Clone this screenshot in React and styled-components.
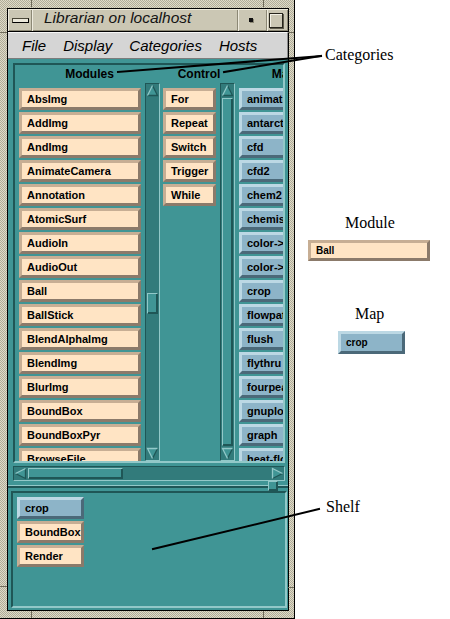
import React from "react";
import styled, { createGlobalStyle } from "styled-components";

const GlobalStyle = createGlobalStyle`
  html, body { margin: 0; padding: 0; background: #ffffff; }
  body { font-family: "Liberation Sans", Arial, Helvetica, sans-serif; }
  *, *::before, *::after { box-sizing: border-box; }
`;

const C = {
  teal: "#409595",
  trough: "#327b7b",
  shadow: "#1f5656",
  light: "#92c8c8",
  peach: "#ffe4c4",
  peachLight: "#c7ae94",
  peachDark: "#8b7a6a",
  blue: "#8db4c8",
  blueLight: "#bcd8e4",
  blueDark: "#4b6979",
  beige: "#cbc7b4",
  menu: "#d5d5d5",
};

const SANS = `"Liberation Sans", Arial, Helvetica, sans-serif`;
const SERIF = `"Liberation Serif", "Times New Roman", serif`;

const Page = styled.div`
  position: relative;
  display: flex;
  width: 450px;
  height: 619px;
  overflow: hidden;
  background: #fff;
`;

const Frame = styled.div`
  position: relative;
  flex: none;
  width: 295px;
  height: 619px;
  padding: 8px 5px 7px 7px;
  border-right: 1px solid #000;
  border-bottom: 1px solid #000;
  background-color: #c9c5b1;
  background-image: repeating-conic-gradient(#dedac8 0% 25%, #b0ac98 0% 50%);
  background-size: 2px 2px;
`;

const Notch = styled.span`
  position: absolute;
  left: ${(p) => p.$x}px;
  top: ${(p) => p.$y}px;
  width: ${(p) => p.$w}px;
  height: ${(p) => p.$h}px;
  background: #6f6b5a;
`;

const Client = styled.div`
  display: flex;
  flex-direction: column;
  height: 100%;
  border: 1px solid #000;
  background: ${C.teal};
`;

/* ---------- title bar ---------- */
const TitleBar = styled.div`
  flex: none;
  display: flex;
  height: 23px;
  border-bottom: 1px solid #000;
  background: ${C.beige};
`;

const TitleCell = styled.div`
  flex: ${(p) => (p.$grow ? 1 : "none")};
  width: ${(p) => (p.$w ? `${p.$w}px` : "auto")};
  display: flex;
  align-items: center;
  justify-content: ${(p) => p.$justify || "center"};
  padding-left: ${(p) => p.$pad || 0}px;
  box-shadow: inset 1px 1px #eeebde, inset -1px -1px #8c8875;
`;

const TitleText = styled.span`
  align-self: flex-start;
  font: italic 15.5px/18px ${SANS};
  color: #141414;
  white-space: nowrap;
`;

const MenuGlyph = styled.span`
  display: block;
  width: 17px;
  height: 5px;
  background: #ebe8da;
  border: 1px solid #4a4738;
  border-right-color: #000;
  border-bottom-color: #000;
`;

const IconDot = styled.span`
  display: block;
  width: 4px;
  height: 4px;
  background: #111;
  box-shadow: 1px 1px #8c8875;
  margin-right: 3px;
`;

const MaxGlyph = styled.span`
  display: block;
  width: 14px;
  height: 15px;
  border: 1px solid #26241c;
  box-shadow: inset 1px 1px #f3f1e6, 1px 1px #5f5c4c;
  background: ${C.beige};
`;

/* ---------- menu bar ---------- */
const MenuBar = styled.div`
  flex: none;
  display: flex;
  gap: 17px;
  height: 27px;
  padding-left: 14px;
  background: ${C.menu};
  border-top: 1px solid #f6f6f6;
  border-bottom: 1px solid #7c7c7c;
  border-right: 1px solid #8c8c8c;
`;

const MenuItem = styled.span`
  font: italic 15px/25px ${SANS};
  color: #000;
  white-space: nowrap;
`;

/* ---------- main teal area ---------- */
const Main = styled.div`
  flex: 1;
  display: flex;
  flex-direction: column;
  min-height: 0;
  background: ${C.teal};
`;

const ListPane = styled.div`
  flex: none;
  display: flex;
  height: 400px;
  margin: 4px 3px 0 5px;
  padding-left: 4px;
  border: 2px solid;
  border-color: ${C.shadow} ${C.light} ${C.light} ${C.shadow};
  overflow: hidden;
`;

const Group = styled.div`
  flex: none;
  display: flex;
  flex-direction: column;
  margin-left: ${(p) => p.$gap || 0}px;
`;

const GroupHeader = styled.div`
  flex: none;
  height: 18px;
  font: bold 12px/18px ${SANS};
  color: #000;
  text-align: center;
  white-space: nowrap;
`;

const GroupBody = styled.div`
  flex: 1;
  display: flex;
  gap: 4px;
  min-height: 0;
`;

const List = styled.div`
  flex: none;
  width: ${(p) => p.$w}px;
  display: flex;
  flex-direction: column;
  gap: 2px;
  padding-top: 5px;
  overflow: hidden;
`;

const Button = styled.div`
  flex: none;
  display: flex;
  align-items: center;
  width: ${(p) => p.$w}px;
  height: ${(p) => p.$h || 22}px;
  padding-left: 5px;
  border: 3px solid;
  border-color: ${(p) =>
    p.$kind === "map"
      ? `${C.blueLight} ${C.blueDark} ${C.blueDark} ${C.blueLight}`
      : `${C.peachLight} ${C.peachDark} ${C.peachDark} ${C.peachLight}`};
  background: ${(p) => (p.$kind === "map" ? C.blue : C.peach)};
  font-family: ${SANS};
  font-weight: bold;
  font-size: ${(p) => p.$size || 11}px;
  color: #000;
  white-space: nowrap;
  overflow: hidden;
`;

/* ---------- scrollbars ---------- */
const VScroll = styled.div`
  flex: none;
  display: flex;
  flex-direction: column;
  width: 15px;
  border: 1px solid;
  border-color: ${C.shadow} ${C.light} ${C.light} ${C.shadow};
  background: ${C.trough};
`;

const HScroll = styled.div`
  flex: none;
  display: flex;
  height: 15px;
  margin: 3px 3px 0 5px;
  border: 1px solid;
  border-color: ${C.shadow} ${C.light} ${C.light} ${C.shadow};
  background: ${C.trough};
`;

const Track = styled.div`
  flex: 1;
  display: flex;
  flex-direction: ${(p) => (p.$horizontal ? "row" : "column")};
  padding: 1px;
  min-width: 0;
  min-height: 0;
`;

const Thumb = styled.div`
  flex: ${(p) => (p.$fill ? 1 : "none")};
  ${(p) =>
    p.$horizontal
      ? `width: ${p.$size}px; margin-left: ${p.$offset || 0}px;`
      : p.$fill
      ? ""
      : `height: ${p.$size}px; margin-top: ${p.$offset || 0}px;`}
  border: 1px solid;
  border-color: ${C.light} ${C.shadow} ${C.shadow} ${C.light};
  box-shadow: inset -1px -1px ${C.shadow};
  background: ${C.teal};
`;

const ArrowBox = styled.svg`
  flex: none;
  display: block;
`;

const ARROWS = {
  up: { pts: "6.5,1.5 11.5,11.5 1.5,11.5", light: "1.5,11.5 6.5,1.5", dark: "6.5,1.5 11.5,11.5 1.5,11.5" },
  down: { pts: "1.5,1.5 11.5,1.5 6.5,11.5", light: "6.5,11.5 1.5,1.5 11.5,1.5", dark: "11.5,1.5 6.5,11.5" },
  left: { pts: "1.5,6.5 11.5,1.5 11.5,11.5", light: "1.5,6.5 11.5,1.5", dark: "11.5,1.5 11.5,11.5 1.5,6.5" },
  right: { pts: "1.5,1.5 11.5,6.5 1.5,11.5", light: "1.5,11.5 1.5,1.5 11.5,6.5", dark: "11.5,6.5 1.5,11.5" },
};

function Arrow({ dir }) {
  const a = ARROWS[dir];
  return (
    <ArrowBox viewBox="0 0 13 13" width="13" height="13">
      <polygon points={a.pts} fill={C.teal} />
      <polyline points={a.dark} fill="none" stroke={C.shadow} strokeWidth="1.3" />
      <polyline points={a.light} fill="none" stroke={C.light} strokeWidth="1.3" />
    </ArrowBox>
  );
}

function VerticalScrollbar({ offset, size, fill }) {
  return (
    <VScroll>
      <Arrow dir="up" />
      <Track>
        <Thumb $offset={offset} $size={size} $fill={fill} />
      </Track>
      <Arrow dir="down" />
    </VScroll>
  );
}

/* ---------- sash & shelf ---------- */
const Sash = styled.div`
  flex: none;
  display: flex;
  align-items: center;
  height: 10px;
`;

const SashLine = styled.div`
  flex: ${(p) => (p.$w ? "none" : 1)};
  width: ${(p) => (p.$w ? `${p.$w}px` : "auto")};
  height: 3px;
  border-top: 1px solid ${C.light};
  border-bottom: 2px solid ${C.shadow};
`;

const SashHandle = styled.div`
  flex: none;
  width: 10px;
  height: 10px;
  border: 1px solid;
  border-color: ${C.light} ${C.shadow} ${C.shadow} ${C.light};
  box-shadow: inset -1px -1px ${C.shadow};
  background: ${C.teal};
`;

const ShelfPane = styled.div`
  flex: none;
  display: flex;
  flex-direction: column;
  gap: 2px;
  height: 117px;
  margin: 0 1px 0 3px;
  padding: 4px;
  border: 2px solid;
  border-color: ${C.shadow} ${C.light} ${C.light} ${C.shadow};
`;

/* ---------- annotations ---------- */
const Side = styled.div`
  flex: 1;
  display: flex;
  flex-direction: column;
  align-items: flex-start;
`;

const Note = styled.div`
  margin-top: ${(p) => p.$top}px;
  margin-left: ${(p) => p.$left}px;
  font: 16px/18px ${SERIF};
  color: #000;
  white-space: nowrap;
`;

const Placed = styled.div`
  margin-top: ${(p) => p.$top}px;
  margin-left: ${(p) => p.$left}px;
`;

const Leaders = styled.svg`
  position: absolute;
  left: 0;
  top: 0;
  pointer-events: none;
`;

/* ---------- data ---------- */
const MODULES = [
  "AbsImg", "AddImg", "AndImg", "AnimateCamera", "Annotation", "AtomicSurf",
  "AudioIn", "AudioOut", "Ball", "BallStick", "BlendAlphaImg", "BlendImg",
  "BlurImg", "BoundBox", "BoundBoxPyr", "BrowseFile",
];
const CONTROL = ["For", "Repeat", "Switch", "Trigger", "While"];
const MAPS = [
  "animation", "antarctica", "cfd", "cfd2", "chem2", "chemistry", "color->gray",
  "color->rgb", "crop", "flowpaths", "flush", "flythru", "fourpeaks", "gnuplot",
  "graph", "heat-flow",
];

export default function App() {
  return (
    <>
      <GlobalStyle />
      <Page>
        <Frame>
          <Notch $x={31} $y={0} $w={1} $h={7} />
          <Notch $x={263} $y={0} $w={1} $h={7} />
          <Notch $x={31} $y={611} $w={1} $h={7} />
          <Notch $x={263} $y={611} $w={1} $h={7} />
          <Notch $x={0} $y={32} $w={7} $h={1} />
          <Notch $x={0} $y={586} $w={7} $h={1} />
          <Notch $x={288} $y={32} $w={6} $h={1} />
          <Notch $x={288} $y={587} $w={6} $h={1} />
          <Client>
            <TitleBar>
              <TitleCell $w={24}>
                <MenuGlyph />
              </TitleCell>
              <TitleCell $grow $justify="flex-start" $pad={12}>
                <TitleText>Librarian on localhost</TitleText>
              </TitleCell>
              <TitleCell $w={29}>
                <IconDot />
              </TitleCell>
              <TitleCell $w={21} $justify="flex-start" $pad={2}>
                <MaxGlyph />
              </TitleCell>
            </TitleBar>
            <MenuBar>
              <MenuItem>File</MenuItem>
              <MenuItem>Display</MenuItem>
              <MenuItem>Categories</MenuItem>
              <MenuItem>Hosts</MenuItem>
            </MenuBar>
            <Main>
              <ListPane>
                <Group>
                  <GroupHeader>Modules</GroupHeader>
                  <GroupBody>
                    <List $w={122}>
                      {MODULES.map((m) => (
                        <Button key={m} $w={122}>{m}</Button>
                      ))}
                    </List>
                    <VerticalScrollbar offset={195} size={21} />
                  </GroupBody>
                </Group>
                <Group $gap={3}>
                  <GroupHeader>Control</GroupHeader>
                  <GroupBody>
                    <List $w={53}>
                      {CONTROL.map((m) => (
                        <Button key={m} $w={53}>{m}</Button>
                      ))}
                    </List>
                    <VerticalScrollbar fill />
                  </GroupBody>
                </Group>
                <Group $gap={4}>
                  <GroupHeader>Maps</GroupHeader>
                  <GroupBody>
                    <List $w={77}>
                      {MAPS.map((m) => (
                        <Button key={m} $w={77} $kind="map">{m}</Button>
                      ))}
                    </List>
                    <VerticalScrollbar offset={0} size={60} />
                  </GroupBody>
                </Group>
              </ListPane>
              <HScroll>
                <Arrow dir="left" />
                <Track $horizontal>
                  <Thumb $horizontal $offset={0} $size={95} />
                </Track>
                <Arrow dir="right" />
              </HScroll>
              <Sash>
                <SashLine />
                <SashHandle />
                <SashLine $w={10} />
              </Sash>
              <ShelfPane>
                <Button $w={67} $kind="map">crop</Button>
                <Button $w={67}>BoundBox</Button>
                <Button $w={67}>Render</Button>
              </ShelfPane>
            </Main>
          </Client>
        </Frame>
        <Side>
          <Note $top={46} $left={30}>Categories</Note>
          <Note $top={150} $left={50}>Module</Note>
          <Placed $top={8} $left={13}>
            <Button $w={122} $h={21} $size={10}>Ball</Button>
          </Placed>
          <Note $top={44} $left={60}>Map</Note>
          <Placed $top={8} $left={43}>
            <Button $w={67} $h={23} $size={10} $kind="map">crop</Button>
          </Placed>
          <Note $top={144} $left={31}>Shelf</Note>
        </Side>
        <Leaders width="450" height="619" viewBox="0 0 450 619">
          <g stroke="#000" strokeWidth="2" strokeLinecap="square">
            <line x1="118" y1="72" x2="321" y2="56" />
            <line x1="224" y1="72" x2="321" y2="56" />
            <line x1="153" y1="549" x2="319" y2="509" />
          </g>
        </Leaders>
      </Page>
    </>
  );
}
